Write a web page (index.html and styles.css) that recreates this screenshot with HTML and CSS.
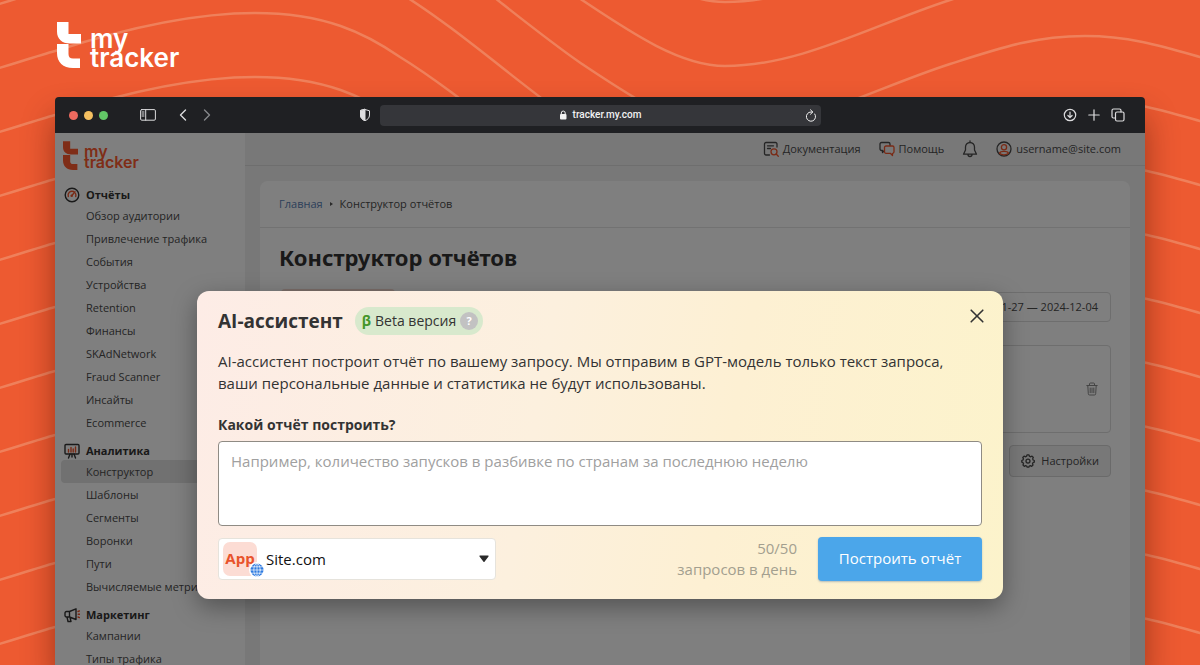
FILE: index.html
```
<!DOCTYPE html>
<html lang="ru">
<head>
<meta charset="utf-8">
<title>MyTracker — Конструктор отчётов</title>
<link rel="stylesheet" href="styles.css">
</head>
<body>
<svg class="waves" viewBox="0 0 1200 665" preserveAspectRatio="xMidYMin slice" aria-hidden="true">
  <defs>
    <path id="wave" d="M-60 -107C-20 -117 30 -134 55 -141C120 -162 190 -179 255 -179C325 -179 365 -159 400 -135C460 -98 520 -43 582 0C630 32 680 66 725 66C800 66 870 26 950 0C1000 -16 1035 -28 1085 -28C1130 -28 1165 -17 1200 -7L1240 6"/>
  </defs>
  <g fill="none" stroke="#f0a07e" stroke-opacity=".55" stroke-width="2.5">
    <use href="#wave" y="-64"/><use href="#wave"/><use href="#wave" y="64"/><use href="#wave" y="128"/>
    <use href="#wave" y="192"/><use href="#wave" y="256"/><use href="#wave" y="320"/><use href="#wave" y="384"/>
    <use href="#wave" y="448"/><use href="#wave" y="512"/><use href="#wave" y="576"/><use href="#wave" y="640"/>
    <use href="#wave" y="704"/><use href="#wave" y="768"/>
  </g>
</svg>
<svg class="sprite" aria-hidden="true">
  <symbol id="mark" viewBox="0 0 24 46">
    <path d="M0 0H11.500V12H24V21.500H13C5 21.500 0 17 0 9.500Z"/>
    <path d="M0 22H11.500V32C11.500 35 13 36.500 16 36.500H23V46H16C6 46 0 40 0 31Z"/>
  </symbol>
</svg>

<header class="brand">
  <svg class="brand-mark" aria-hidden="true"><use href="#mark"/></svg>
  <span class="brand-name">my<br>tracker</span>
</header>

<div class="window">
  <div class="chrome">
    <div class="chrome-side">
      <i class="light red"></i><i class="light yellow"></i><i class="light green"></i>
      <svg class="ic-panel" viewBox="0 0 16 12"><rect x=".6" y=".6" width="14.800" height="10.600" rx="1.200"/><path d="M5.700 .6V11.200M2 3h2M2 5h2M2 7h2"/></svg>
      <svg class="ic-back" viewBox="0 0 8 12"><path d="M6.500 1 1.500 6l5 5"/></svg>
      <svg class="ic-forward" viewBox="0 0 8 12"><path d="M1.500 1 6.500 6l-5 5"/></svg>
      <svg class="ic-shield" viewBox="0 0 12 14"><path d="M6 1.500 10.500 2.800V7c0 3-2 4.700-4.500 5.700C3.500 11.700 1.500 10 1.500 7V2.800Z"/><path class="solid" d="M6 1.500V12.700C3.500 11.700 1.500 10 1.500 7V2.800Z"/></svg>
    </div>
    <div class="address">
      <svg class="ic-lock" viewBox="0 0 8 10"><rect x="1" y="4" width="6.500" height="5.500" rx="1"/><path d="M2.300 4.500V3a1.950 1.950 0 0 1 3.900 0V4.500"/></svg>
      <span>tracker.my.com</span>
      <svg class="ic-reload" viewBox="0 0 12 13"><path d="M9.800 5A4.600 4.600 0 1 1 6 3H7.500M5.500 .8 7.800 3 5.500 5.200"/></svg>
    </div>
    <div class="chrome-side end">
      <svg class="ic-tool" viewBox="0 0 14 14"><circle cx="7" cy="7" r="5.700"/><path d="M7 4v5.500M4.900 7.500 7 9.700l2.100-2.200"/></svg>
      <svg class="ic-tool" viewBox="0 0 14 14"><path d="M7 1.800V12.200M1.800 7H12.200"/></svg>
      <svg class="ic-tool" viewBox="0 0 14 14"><rect x="4.500" y="4" width="8.500" height="9" rx="1.500"/><path d="M4.500 10H2.500A1.500 1.500 0 0 1 1 8.500V2.500A1.500 1.500 0 0 1 2.500 1H8.500A1.500 1.500 0 0 1 10 2.500V4"/></svg>
    </div>
  </div>

  <div class="app">
    <nav class="sidebar">
      <div class="logo">
        <svg class="logo-mark" aria-hidden="true"><use href="#mark"/></svg>
        <span class="logo-name">my<br>tracker</span>
      </div>
      <h2><svg viewBox="0 0 16 16"><circle cx="8" cy="8" r="6.800"/><path class="accent" d="M4.300 9.500A4 4 0 0 1 9.500 4.500M11.700 9.500A4 4 0 0 0 11.500 6.500M7.700 8.700 11 4.800"/><circle class="accent" cx="7.700" cy="8.700" r=".6"/></svg>Отчёты</h2>
      <a href="#">Обзор аудитории</a>
      <a href="#">Привлечение трафика</a>
      <a href="#">События</a>
      <a href="#">Устройства</a>
      <a href="#">Retention</a>
      <a href="#">Финансы</a>
      <a href="#">SKAdNetwork</a>
      <a href="#">Fraud Scanner</a>
      <a href="#">Инсайты</a>
      <a href="#">Ecommerce</a>
      <h2><svg viewBox="0 0 16 16"><rect x="1" y="1.500" width="14" height="9.500" rx="1"/><path d="M6 11 4.500 15M10 11l1.500 4M8 11v3"/><path class="accent" d="M4.500 9V6.500M7 9V4.500M9.200 9V6M11.500 9V4"/></svg>Аналитика</h2>
      <a href="#" class="current">Конструктор</a>
      <a href="#">Шаблоны</a>
      <a href="#">Сегменты</a>
      <a href="#">Воронки</a>
      <a href="#">Пути</a>
      <a href="#">Вычисляемые метрики</a>
      <h2><svg viewBox="0 0 16 16"><path d="M5.500 4.500 12 1.800V12.500L5.500 10H2.500A1.500 1.500 0 0 1 1 8.500V6A1.500 1.500 0 0 1 2.500 4.500ZM5.500 4.500V10M3 10l1 4.500H7L6 10.300"/><path class="accent" d="M14 4.500 15.500 3.900M14.200 7.200H15.800M14 10l1.500 .6"/></svg>Маркетинг</h2>
      <a href="#">Кампании</a>
      <a href="#">Типы трафика</a>
    </nav>

    <main class="main">
      <div class="topbar">
        <a href="#"><svg viewBox="0 0 16 16"><path d="M6.500 14H3A1.500 1.500 0 0 1 1.500 12.500V3A1.500 1.500 0 0 1 3 1.500H12.500A1.500 1.500 0 0 1 14 3V6M4.500 4.800h6M4.500 7.500H7.500"/><circle class="accent" cx="11" cy="10.800" r="3"/><path class="accent" d="M13.200 13 15.300 15.200"/></svg>Документация</a>
        <a href="#"><svg viewBox="0 0 16 16"><path d="M5 10 3.500 11.500V9.500H2.500A1.500 1.500 0 0 1 1 8V3A1.500 1.500 0 0 1 2.500 1.500H9.500A1.500 1.500 0 0 1 11 3V4.500"/><path class="accent" d="M7 5H13.500A1.500 1.500 0 0 1 15 6.500V10.800A1.500 1.500 0 0 1 13.500 12.300V14.500L11.300 12.300H7A1.500 1.500 0 0 1 5.500 10.800V6.500A1.500 1.500 0 0 1 7 5Z"/></svg>Помощь</a>
        <a href="#" aria-label="Уведомления"><svg class="bell" viewBox="0 0 16 18"><path d="M8 2.500A4.500 4.500 0 0 0 3.500 7V10L1.500 14.200H14.500L12.500 10V7A4.500 4.500 0 0 0 8 2.500ZM8 2.500V.8M6 14.500A2 2 0 0 0 10 14.500"/></svg></a>
        <a href="#"><svg viewBox="0 0 16 16"><circle cx="8" cy="8" r="7"/><circle class="accent" cx="8" cy="6.300" r="2.600"/><path class="accent" d="M3.500 12.300C4.500 9.800 11.500 9.800 12.500 12.300C10.500 14.300 5.500 14.300 3.500 12.300Z"/></svg>username@site.com</a>
      </div>
      <section class="card">
        <div class="crumbs"><a href="#">Главная</a><i class="crumb-arrow"></i><span>Конструктор отчётов</span></div>
        <div class="card-body">
          <h1>Конструктор отчётов</h1>
          <div class="toolbar"><i class="tab"></i><button type="button" class="dates">2024-11-27 — 2024-12-04</button></div>
          <div class="segment"><button type="button" class="trash" aria-label="Удалить"><svg viewBox="0 0 12 14"><path d="M.8 3.500H11.200M3.500 3.300V2A1 1 0 0 1 4.500 1H7.500A1 1 0 0 1 8.500 2V3.300M1.800 3.500 2.300 11.700A1.300 1.300 0 0 0 3.600 13H8.400A1.300 1.300 0 0 0 9.700 11.700L10.200 3.500M4.200 6V10.700M6 6V10.700M7.800 6V10.700"/></svg></button></div>
          <button type="button" class="settings"><svg viewBox="0 0 14 14"><path d="M5.600 2.200 6 .9H8L8.400 2.200 9.700 2.800 11 2.100 12.300 3.500 11.700 4.800 12.100 6 13.300 6.500V8.200L12 8.700 11.500 9.800 12 11.100 10.700 12.300 9.400 11.700 8.300 12.100 7.800 13.200H6.200L5.700 12.100 4.500 11.700 3.300 12.300 2 11.100 2.500 9.800 2 8.700 .8 8.200V6.500L2 6 2.400 4.800 1.800 3.500 3.100 2.100 4.400 2.800Z"/><circle cx="7" cy="7.100" r="2"/></svg>Настройки</button>
        </div>
      </section>
    </main>

    <div class="overlay">
      <form class="modal" role="dialog" aria-labelledby="title">
        <div class="modal-head">
          <h2 id="title">AI-ассистент</h2>
          <span class="badge"><b class="beta">β</b>Beta версия<button type="button" class="hint">?</button></span>
          <button type="button" class="close" aria-label="Закрыть"><svg viewBox="0 0 14 14"><path d="M1.200 1.200 12.800 12.800M12.800 1.200 1.200 12.800"/></svg></button>
        </div>
        <p>AI-ассистент построит отчёт по вашему запросу. Мы отправим в GPT-модель только текст запроса, ваши персональные данные и статистика не будут использованы.</p>
        <label for="query">Какой отчёт построить?</label>
        <textarea id="query" placeholder="Например, количество запусков в разбивке по странам за последнюю неделю"></textarea>
        <div class="modal-foot">
          <div class="project">
            <select aria-label="Проект"><option>Site.com</option></select>
            <span class="app-icon">App</span>
            <svg class="globe" viewBox="0 0 16 16"><circle class="halo" cx="8" cy="8" r="8"/><circle class="ball" cx="8" cy="8" r="6.500"/><path d="M8 1.500V14.500M1.500 8H14.500M2.500 4.800H13.500M2.500 11.200H13.500"/><ellipse cx="8" cy="8" rx="3.200" ry="6.500"/></svg>
            <svg class="caret" viewBox="0 0 10 8"><path d="M1 .5H9Q10 .5 9.500 1.500L5.700 6.500Q5 7.500 4.300 6.500L.5 1.500Q0 .5 1 .5Z"/></svg>
          </div>
          <div class="quota">50/50<br>запросов в день</div>
          <button type="submit" class="submit">Построить отчёт</button>
        </div>
      </form>
    </div>
  </div>
</div>
</body>
</html>
```
FILE: styles.css
```
* { box-sizing: border-box; }
html, body { height: 100%; }
body {
  margin: 0;
  display: flex;
  flex-direction: column;
  overflow: hidden;
  position: relative;
  background: #ed5a31;
  color: #333;
  font: 11px/16px "Open Sans", "Noto Sans", sans-serif;
}
h1, h2, p { margin: 0; }
a { color: inherit; text-decoration: none; }
button, select, textarea { font: inherit; color: inherit; }
svg { flex: none; fill: none; stroke: currentColor; stroke-linecap: round; stroke-linejoin: round; }
.waves { position: absolute; inset: 0; width: 100%; height: 100%; }
.sprite { position: absolute; width: 0; height: 0; }

.brand { position: relative; display: flex; gap: 9px; height: 97px; padding: 22px 57px 0; color: #fff; }
.brand-mark, .logo-mark { fill: currentColor; stroke: none; }
.brand-mark { width: 24px; height: 46px; }
.brand-name { padding-top: 7px; font: 600 26px/19px Inter, sans-serif; }

.window {
  position: relative;
  flex: 1;
  min-height: 0;
  margin: 0 55px;
  display: flex;
  flex-direction: column;
  border-radius: 4px 4px 0 0;
  box-shadow: 0 20px 32px rgba(60, 10, 0, .45);
}
.chrome {
  display: grid;
  grid-template-columns: 1fr 441px 1fr;
  align-items: center;
  height: 36px;
  background: #1f2023;
  border-radius: 4px 4px 0 0;
  color: #dcdcde;
}
.chrome-side { display: flex; align-items: center; padding: 0 9px 0 14px; }
.chrome-side.end { justify-content: flex-end; gap: 10px; padding: 0 20px; }
.light { width: 9px; height: 9px; margin-right: 6px; border-radius: 50%; }
.red { background: #ec6a5f; }
.yellow { background: #f4bf60; }
.green { background: #62c666; }
.ic-panel { width: 16px; height: 12px; margin-left: 26px; }
.ic-back, .ic-forward { width: 8px; height: 12px; stroke-width: 1.4; }
.ic-back { margin-left: 23px; }
.ic-forward { margin-left: 16px; color: #86878a; }
.ic-shield { width: 12px; height: 14px; margin-left: auto; }
.solid { fill: currentColor; }
.ic-tool { width: 14px; height: 14px; stroke-width: 1.2; }
.address {
  position: relative;
  display: flex;
  align-items: center;
  justify-content: center;
  gap: 6px;
  height: 21px;
  border-radius: 4px;
  background: #35363a;
  color: #f2f2f2;
  font-family: Roboto, sans-serif;
  font-size: 10px;
  font-weight: 500;
}
.ic-lock { width: 8px; height: 10px; }
.ic-lock rect { fill: currentColor; stroke: none; }
.ic-reload { position: absolute; right: 4px; width: 12px; height: 13px; }

.app { position: relative; flex: 1; min-height: 0; display: flex; overflow: hidden; background: #f1f1f1; color: #4a4a4a; }
.sidebar { flex: none; width: 190px; padding: 8px 6px 0; background: #fff; white-space: nowrap; overflow: hidden; }
.logo { display: flex; gap: 6px; height: 38px; padding-left: 2px; color: #ff5a2e; }
.logo-mark { width: 15px; height: 29px; }
.logo-name { padding-top: 5px; font: 600 16px/11px Inter, sans-serif; }
.sidebar h2 { display: flex; align-items: center; gap: 6px; height: 19px; margin: 7px 0 0 3px; color: #333; font-size: 11px; font-weight: 700; }
.sidebar .logo + h2 { margin-top: 6px; }
.sidebar h2 svg { width: 16px; height: 16px; stroke-width: 1.4; }
.sidebar a { display: block; padding-left: 25px; line-height: 23px; border-radius: 4px; }
.sidebar .current { background: #e2e2e2; }
.accent { color: #f3552b; }

.main { flex: 1; min-width: 0; display: flex; flex-direction: column; }
.topbar { display: flex; align-items: center; justify-content: flex-end; gap: 18px; height: 33px; padding-right: 24px; border-bottom: 1px solid #dcdcdc; }
.topbar a { display: flex; align-items: center; gap: 4px; }
.topbar svg { width: 16px; height: 16px; stroke-width: 1.3; }
.topbar .bell { height: 18px; }
.card { flex: 1; margin: 15px 15px 0; background: #fff; border-radius: 8px 8px 0 0; }
.crumbs { display: flex; align-items: center; gap: 7px; height: 47px; padding: 0 19px; border-bottom: 1px solid #e4e4e4; }
.crumbs a { color: #5a7fb4; }
.crumb-arrow { border-left: 3px solid #555; border-top: 2px solid transparent; border-bottom: 2px solid transparent; }
.card-body { display: flex; flex-direction: column; padding: 14px 19px; }
h1 { color: #333; font: 700 22px/30px "Noto Sans", sans-serif; }
.toolbar { display: flex; align-items: flex-start; justify-content: space-between; margin-top: 17px; }
.tab { width: 114px; height: 30px; margin-left: 2px; border-radius: 4px; background: #f3d9cf; }
.dates { height: 30px; margin-top: 3px; padding: 0 12px; border: 1px solid #dcdcdc; border-radius: 4px; background: #fff; }
.segment { display: flex; align-items: center; justify-content: flex-end; height: 88px; margin-top: 23px; padding-right: 12px; border: 1px solid #dcdcdc; border-radius: 4px; }
.trash { display: flex; padding: 0; border: 0; background: none; color: #888; }
.trash svg { width: 12px; height: 14px; }
.settings { align-self: flex-end; display: flex; align-items: center; gap: 6px; height: 32px; margin-top: 12px; padding: 0 11px; border: 1px solid #d4d4d4; border-radius: 4px; background: #f0f0f0; }
.settings svg { width: 14px; height: 14px; stroke-width: 1.3; }

.overlay { position: absolute; inset: 0; display: flex; align-items: flex-start; justify-content: center; padding: 158px 24px 0; background: rgba(0, 0, 0, .5); color: #333; }
.modal {
  flex: 0 1 806px;
  padding: 15px 21px 18px;
  border-radius: 12px;
  background: linear-gradient(100deg, #fdece6 0%, #fcf0de 42%, #fdf0d3 65%, #fcf3cb 100%);
  box-shadow: 0 8px 24px rgba(0, 0, 0, .35);
}
.modal-head { display: flex; align-items: center; height: 30px; }
.modal-head h2 { font-size: 19px; line-height: 28px; }
.badge { display: flex; align-items: center; gap: 4px; height: 28px; margin-left: 12px; padding: 0 5px 0 7px; border-radius: 14px; background: #d8e9cd; font-size: 14px; }
.beta { color: #43962a; font-size: 14px; }
.hint { width: 18px; height: 18px; padding: 0; border: 0; border-radius: 50%; background: #c2c2c2; color: #fff; font-size: 11px; font-weight: 700; line-height: 18px; }
.close { display: flex; align-self: flex-start; margin: 0 -2px 0 auto; padding: 3px 0; border: 0; background: none; }
.close svg { width: 14px; height: 14px; stroke-width: 1.6; }
.modal p { margin-top: 14px; font-size: 15px; line-height: 22px; }
.modal label { display: block; margin-top: 21px; font-size: 14px; font-weight: 700; line-height: 20px; }
.modal textarea { display: block; width: 100%; height: 85px; margin-top: 6px; padding: 8px 12px; border: 1px solid #8f8b84; border-radius: 4px; background: #fff; font-size: 15px; line-height: 22px; resize: none; }
.modal textarea::placeholder { color: #a0a0a0; opacity: 1; }
.modal-foot { display: flex; align-items: center; margin-top: 11px; }
.project { position: relative; flex: 0 1 278px; }
.project select { display: block; width: 100%; height: 42px; padding: 0 32px 0 47px; border: 1px solid #e6e3dc; border-radius: 4px; background: #fff; color: #111; font-size: 15px; appearance: none; }
.app-icon { position: absolute; left: 5px; top: 4px; width: 34px; height: 34px; border-radius: 7px; background: #fcdcd4; color: #e8532c; font-size: 15px; font-weight: 700; line-height: 32px; text-align: center; pointer-events: none; }
.globe { position: absolute; left: 31px; top: 24px; width: 16px; height: 16px; color: #fff; stroke-width: .7; }
.halo { fill: #fff; stroke: none; }
.ball { fill: #2f7be0; stroke: none; }
.caret { position: absolute; right: 7px; top: 17px; width: 10px; height: 8px; fill: #2a2a2a; stroke: none; pointer-events: none; }
.quota { margin-left: auto; color: #a39f8f; font-size: 15px; line-height: 21px; text-align: right; }
.submit { flex: none; width: 164px; height: 44px; margin-left: 21px; padding: 0 0 2px; border: 0; border-radius: 4px; background: #4ba6ea; color: #fff; font-size: 15px; box-shadow: 0 1px 2px rgba(40, 90, 140, .35); }
```
